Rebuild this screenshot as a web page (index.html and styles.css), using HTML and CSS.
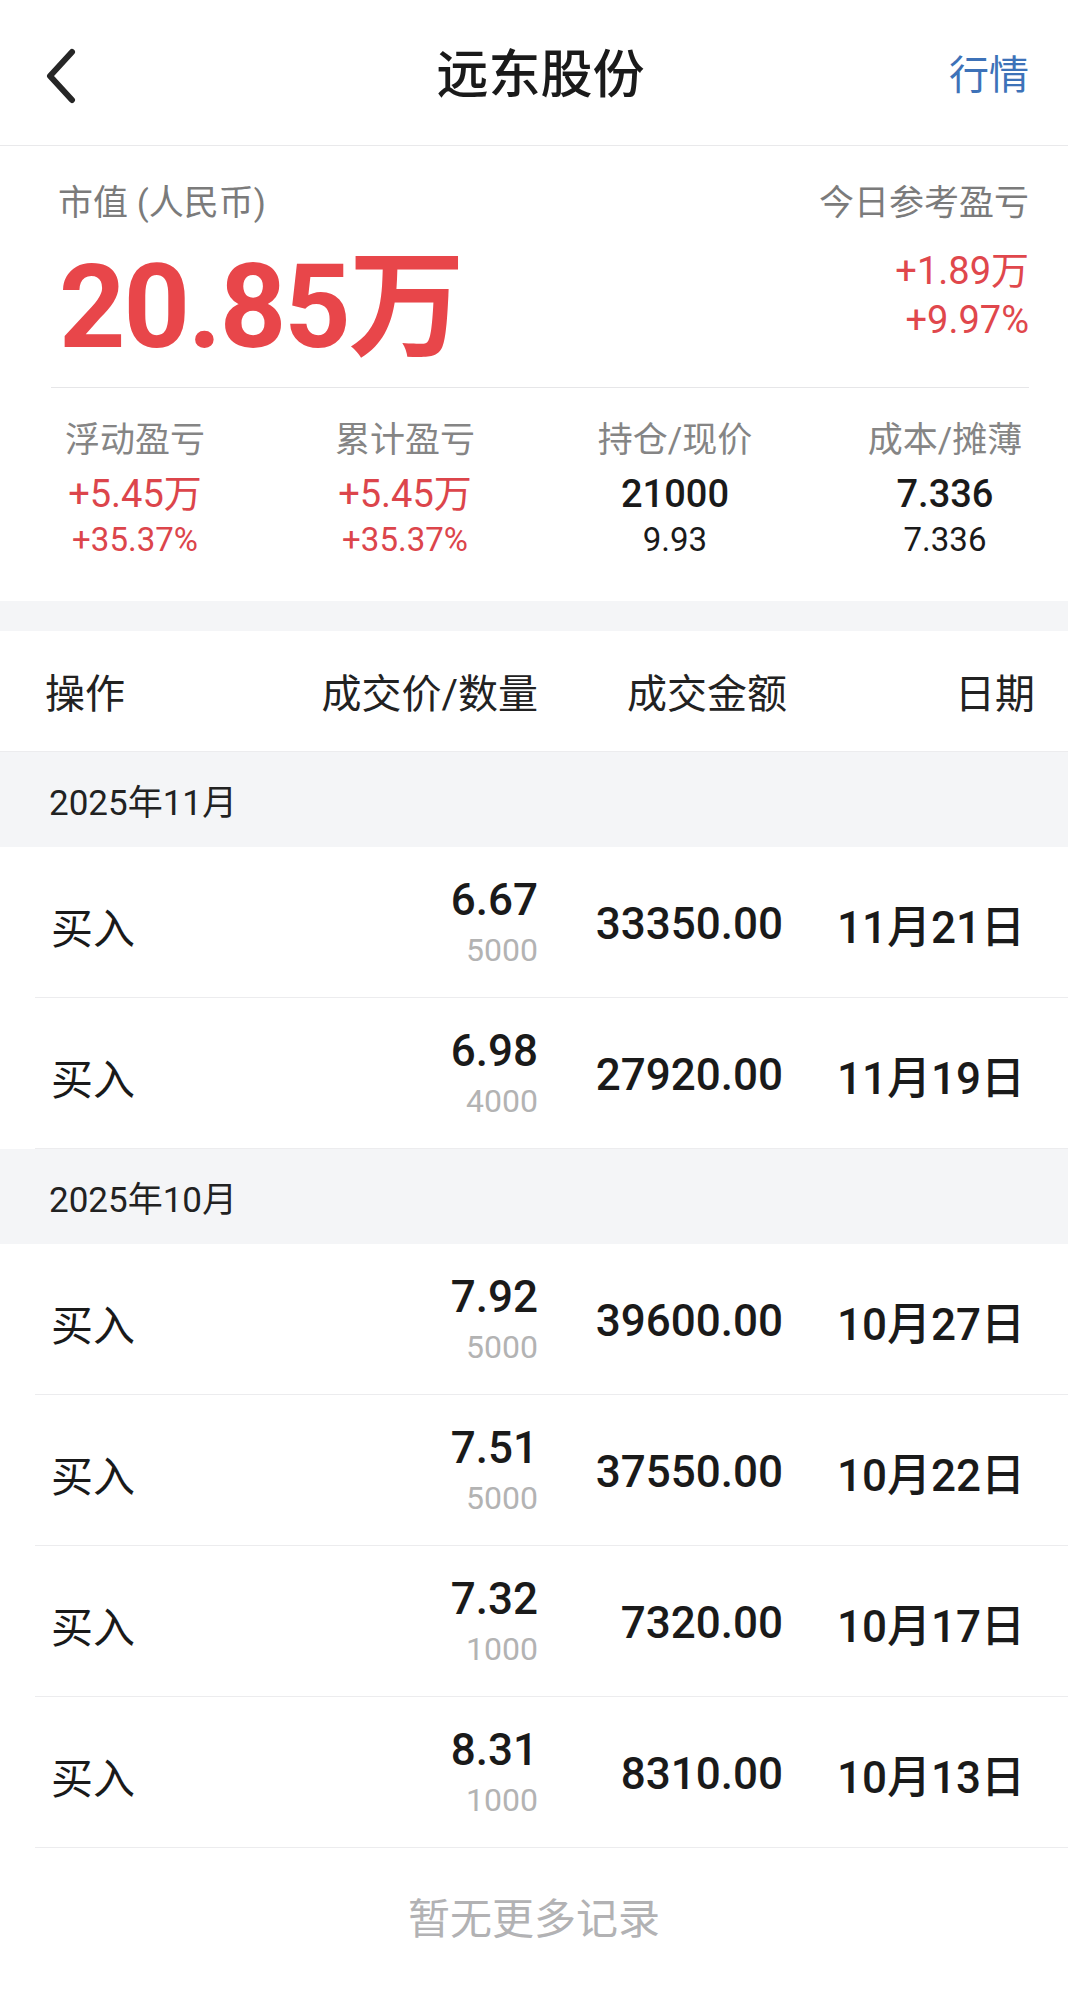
FILE: index.html
```html
<!DOCTYPE html>
<html lang="zh-CN">
<head>
    <meta charset="UTF-8">
    <title>远东股份</title>
    <link rel="stylesheet" href="styles.css">
</head>
<body>

    <div class="topbar">
        <div class="back">
            <svg width="36" height="56" viewBox="0 0 36 56">
                <path d="M30 4 L8 28 L30 52" fill="none" stroke="#262626" stroke-width="6" stroke-linecap="round" stroke-linejoin="round"/>
            </svg>
        </div>
        <div class="title">远东股份</div>
        <div class="market">行情</div>
    </div>

    <div class="summary">
        <div class="summary-top">
            <div class="mv">
                <div class="label">市值 (人民币)</div>
                <div class="mv-value">20.85万</div>
            </div>
            <div class="today">
                <div class="label">今日参考盈亏</div>
                <div class="today-value">+1.89万</div>
                <div class="today-value">+9.97%</div>
            </div>
        </div>
        <div class="stats">
            <div class="stat">
                <div class="stat-label">浮动盈亏</div>
                <div class="stat-main red">+5.45万</div>
                <div class="stat-sub red">+35.37%</div>
            </div>
            <div class="stat">
                <div class="stat-label">累计盈亏</div>
                <div class="stat-main red">+5.45万</div>
                <div class="stat-sub red">+35.37%</div>
            </div>
            <div class="stat">
                <div class="stat-label">持仓/现价</div>
                <div class="stat-main">21000</div>
                <div class="stat-sub">9.93</div>
            </div>
            <div class="stat">
                <div class="stat-label">成本/摊薄</div>
                <div class="stat-main">7.336</div>
                <div class="stat-sub">7.336</div>
            </div>
        </div>
    </div>

    <div class="gap"></div>

    <div class="thead">
        <div>操作</div>
        <div class="r">成交价/数量</div>
        <div class="r">成交金额</div>
        <div class="r">日期</div>
    </div>

    <div class="month">2025年11月</div>
    <div class="row">
        <div class="op">买入</div>
        <div class="price"><div class="p">6.67</div><div class="q">5000</div></div>
        <div class="amount">33350.00</div>
        <div class="date">11月21日</div>
    </div>
    <div class="row">
        <div class="op">买入</div>
        <div class="price"><div class="p">6.98</div><div class="q">4000</div></div>
        <div class="amount">27920.00</div>
        <div class="date">11月19日</div>
    </div>

    <div class="month">2025年10月</div>
    <div class="row">
        <div class="op">买入</div>
        <div class="price"><div class="p">7.92</div><div class="q">5000</div></div>
        <div class="amount">39600.00</div>
        <div class="date">10月27日</div>
    </div>
    <div class="row">
        <div class="op">买入</div>
        <div class="price"><div class="p">7.51</div><div class="q">5000</div></div>
        <div class="amount">37550.00</div>
        <div class="date">10月22日</div>
    </div>
    <div class="row">
        <div class="op">买入</div>
        <div class="price"><div class="p">7.32</div><div class="q">1000</div></div>
        <div class="amount">7320.00</div>
        <div class="date">10月17日</div>
    </div>
    <div class="row">
        <div class="op">买入</div>
        <div class="price"><div class="p">8.31</div><div class="q">1000</div></div>
        <div class="amount">8310.00</div>
        <div class="date">10月13日</div>
    </div>

    <div class="nomore">暂无更多记录</div>

</body>
</html>
```

FILE: styles.css
```css
body {
    font-family: Roboto, "Noto Sans CJK SC", sans-serif;
    background-color: #fff;
    color: #1a1a1a;
    margin: 0;
    padding: 0;
    width: 1068px;
    overflow: hidden;
}
.topbar {
    height: 146px;
    border-bottom: 1px solid #e9e9eb;
    display: grid;
    grid-template-columns: 1fr auto 1fr;
    align-items: center;
    padding: 6px 39px 0 42px;
    box-sizing: border-box;
}
.back svg {
    display: block;
}
.title {
    font-size: 52px;
    font-weight: 500;
    line-height: 60px;
    color: #1a1a1a;
    padding-left: 10px;
}
.market {
    justify-self: end;
    font-size: 40px;
    line-height: 50px;
    color: #3d72b8;
}
.summary {
    background: #fff;
}
.summary-top {
    margin: 0 39px 0 51px;
    padding: 34px 0 22px;
    border-bottom: 1px solid #e6e6e8;
    display: flex;
    justify-content: space-between;
}
.label {
    font-size: 35px;
    line-height: 48px;
    color: #7b7b7b;
}
.mv .label {
    padding-left: 7px;
}
.mv-value {
    margin-top: 21px;
    font-size: 116px;
    line-height: 116px;
    font-weight: 700;
    color: #e8464a;
    letter-spacing: -2px;
    padding-left: 8px;
}
.today {
    text-align: right;
}
.today-value {
    font-size: 38px;
    line-height: 49px;
    color: #e0474c;
}
.today .label + .today-value {
    margin-top: 19px;
}
.stats {
    display: grid;
    grid-template-columns: repeat(4, 270px);
    padding: 29px 0 39px;
    text-align: center;
}
.stat-label {
    font-size: 35px;
    line-height: 48px;
    color: #858585;
}
.stat-main {
    margin-top: 6px;
    font-size: 38px;
    line-height: 46px;
    font-weight: 500;
}
.stat-main.red {
    font-weight: 400;
}
.stat-sub {
    margin-top: 1px;
    font-size: 33px;
    line-height: 44px;
}
.red {
    color: #dc454b;
}
.gap {
    height: 30px;
    background: #f4f5f7;
}
.thead {
    height: 120px;
    border-bottom: 1px solid #ececee;
    display: grid;
    grid-template-columns: 1fr 225px 249px 248px;
    align-items: center;
    padding: 0 33px 0 45px;
    font-size: 40px;
    color: #222;
}
.r {
    text-align: right;
}
.month {
    height: 95px;
    background: #f4f5f7;
    display: flex;
    align-items: center;
    padding-left: 49px;
    font-size: 35px;
    color: #222;
}
.row {
    height: 150px;
    margin-left: 35px;
    padding: 0 43px 0 16px;
    border-bottom: 1px solid #ececee;
    display: grid;
    grid-template-columns: 1fr 238px 245px 242px;
    align-items: center;
}
.op {
    font-size: 42px;
    padding-top: 6px;
}
.price {
    text-align: right;
}
.p {
    font-size: 44px;
    line-height: 50px;
    font-weight: 500;
}
.q {
    font-size: 32px;
    line-height: 40px;
    color: #b3b3b3;
    margin-top: 5px;
}
.amount, .date {
    text-align: right;
    font-size: 44px;
    font-weight: 500;
    padding-top: 4px;
}
.nomore {
    padding-top: 44px;
    text-align: center;
    font-size: 42px;
    line-height: 56px;
    color: #b2b2b4;
}
```
